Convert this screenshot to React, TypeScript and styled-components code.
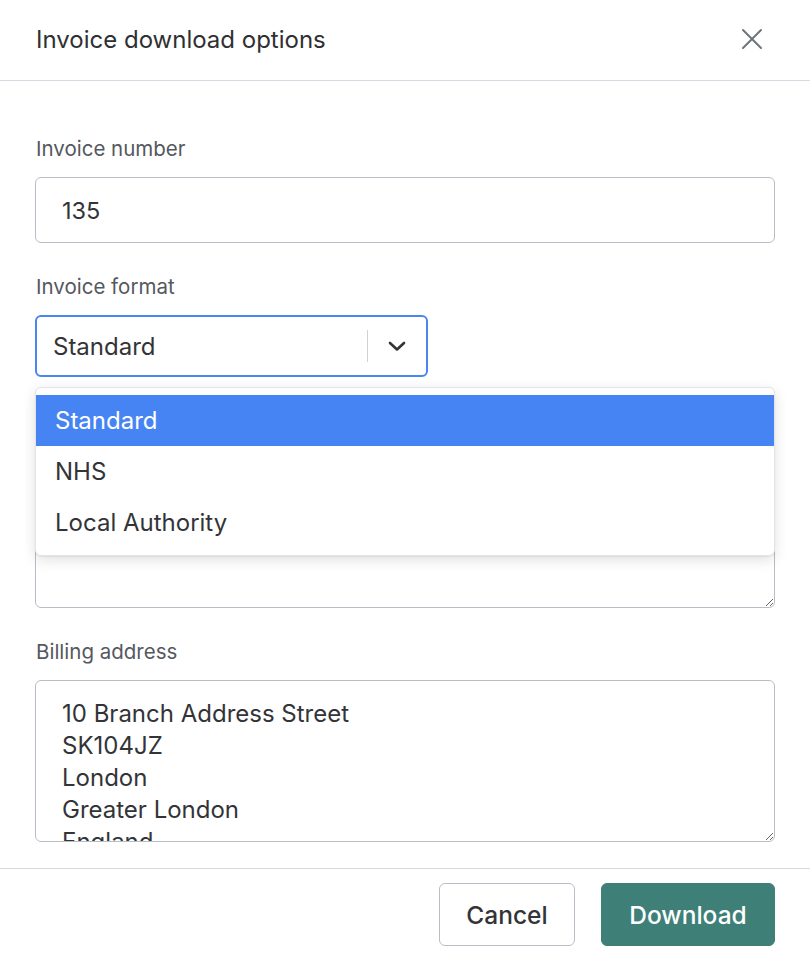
import React from "react";
import styled, { createGlobalStyle } from "styled-components";

const Global = createGlobalStyle`
  html, body { margin: 0; padding: 0; background: #ffffff; }
  body { font-family: "Inter", "Open Sans", sans-serif; color: #333438; }
  * { box-sizing: border-box; }
`;

const Modal = styled.div`
  width: 810px;
  height: 958px;
  display: flex;
  flex-direction: column;
  background: #fff;
  overflow: hidden;
`;

const Header = styled.header`
  height: 81px;
  flex: none;
  display: flex;
  align-items: center;
  justify-content: space-between;
  padding: 0 36px 2px 36px;
  border-bottom: 1px solid #d6dae2;
`;

const Title = styled.h1`
  margin: 0;
  font-size: 24px;
  font-weight: 400;
  color: #2f3033;
`;

const CloseButton = styled.button`
  border: 0;
  background: none;
  padding: 0;
  width: 24px;
  height: 24px;
  display: flex;
  align-items: center;
  justify-content: center;
  color: #6e737b;
  cursor: pointer;
  margin-right: 10px;
`;

const Body = styled.div`
  flex: 1;
  min-height: 0;
  display: flex;
  flex-direction: column;
  gap: 32px;
  padding: 56px 35px 26px 35px;
  overflow: hidden;
`;

const Field = styled.div`
  position: relative;
  flex: none;
  display: flex;
  flex-direction: column;
  gap: 16px;
`;

const Label = styled.label`
  font-size: 20.5px;
  line-height: 24px;
  height: 24px;
  color: #55585e;
  padding-left: 1px;
`;

const TextInput = styled.input`
  height: 66px;
  width: 100%;
  border: 1px solid #b9bdc5;
  border-radius: 6px;
  padding: 0 26px;
  font-family: inherit;
  font-size: 23.5px;
  color: #333438;
  background: #fff;
  outline: none;
`;

const SelectControl = styled.div`
  width: 393px;
  height: 62px;
  border: 2px solid #4a86f2;
  border-radius: 6px;
  display: flex;
  align-items: center;
  background: #fff;
`;

const SelectValue = styled.span`
  flex: 1;
  padding-left: 16px;
  font-size: 24px;
  color: #333438;
`;

const Separator = styled.span`
  width: 1px;
  height: 32px;
  background: #cfd1d4;
`;

const Indicator = styled.span`
  width: 58px;
  display: flex;
  align-items: center;
  justify-content: center;
  color: #333438;
`;

const Menu = styled.ul`
  position: absolute;
  left: 0;
  right: 0;
  top: calc(100% + 10px);
  margin: 0;
  padding: 7px 0 7px;
  list-style: none;
  background: #fff;
  border-radius: 6px;
  border: 1px solid #e3e4e7;
  box-shadow: 0 4px 14px rgba(0, 0, 0, 0.12), 0 1px 2px rgba(0, 0, 0, 0.06);
  z-index: 5;
`;

const Option = styled.li<{ $active?: boolean }>`
  height: 51px;
  display: flex;
  align-items: center;
  padding-left: 19px;
  font-size: 24px;
  color: ${(p) => (p.$active ? "#ffffff" : "#333438")};
  background: ${(p) => (p.$active ? "#4684f4" : "transparent")};
`;

const TextArea = styled.textarea<{ $rows?: number }>`
  width: 100%;
  height: ${(p) => p.$rows ?? 162}px;
  border: 1px solid #b9bdc5;
  border-radius: 6px;
  padding: 17px 26px;
  font-family: inherit;
  font-size: 24px;
  line-height: 32px;
  color: #333438;
  background: #fff;
  resize: vertical;
  overflow: hidden;
  outline: none;
  display: block;
`;

const Footer = styled.footer`
  flex: none;
  height: 90px;
  border-top: 1px solid #d6dae2;
  display: flex;
  justify-content: flex-end;
  align-items: flex-start;
  gap: 26px;
  padding: 14px 35px 0 35px;
`;

const Button = styled.button<{ $primary?: boolean }>`
  height: 63px;
  padding: 0 20px;
  border-radius: 6px;
  font-family: inherit;
  font-size: 24.5px;
  font-weight: 500;
  cursor: pointer;
  border: 1px solid ${(p) => (p.$primary ? "#3e7f78" : "#b9bdc5")};
  background: ${(p) => (p.$primary ? "#3e7f78" : "#ffffff")};
  color: ${(p) => (p.$primary ? "#ffffff" : "#333438")};
  min-width: ${(p) => (p.$primary ? "174px" : "136px")};
`;

const address = "10 Branch Address Street\nSK104JZ\nLondon\nGreater London\nEngland";

export default function App() {
  return (
    <>
      <Global />
      <Modal>
        <Header>
          <Title>Invoice download options</Title>
          <CloseButton aria-label="Close">
            <svg width="22" height="22" viewBox="0 0 22 22" fill="none" stroke="currentColor" strokeWidth="2" strokeLinecap="round">
              <line x1="2" y1="2" x2="20" y2="20" />
              <line x1="20" y1="2" x2="2" y2="20" />
            </svg>
          </CloseButton>
        </Header>
        <Body>
          <Field>
            <Label>Invoice number</Label>
            <TextInput defaultValue="135" readOnly />
          </Field>
          <Field>
            <Label>Invoice format</Label>
            <SelectControl>
              <SelectValue>Standard</SelectValue>
              <Separator />
              <Indicator>
                <svg width="20" height="20" viewBox="0 0 20 20" fill="none" stroke="currentColor" strokeWidth="2.6" strokeLinecap="round" strokeLinejoin="round">
                  <polyline points="3,7 10,13.5 17,7" />
                </svg>
              </Indicator>
            </SelectControl>
            <Menu>
              <Option $active>Standard</Option>
              <Option>NHS</Option>
              <Option>Local Authority</Option>
            </Menu>
          </Field>
          <Field>
            <Label aria-hidden="true" />
            <TextArea $rows={159} readOnly defaultValue="" />
          </Field>
          <Field>
            <Label>Billing address</Label>
            <TextArea readOnly defaultValue={address} />
          </Field>
        </Body>
        <Footer>
          <Button>Cancel</Button>
          <Button $primary>Download</Button>
        </Footer>
      </Modal>
    </>
  );
}
